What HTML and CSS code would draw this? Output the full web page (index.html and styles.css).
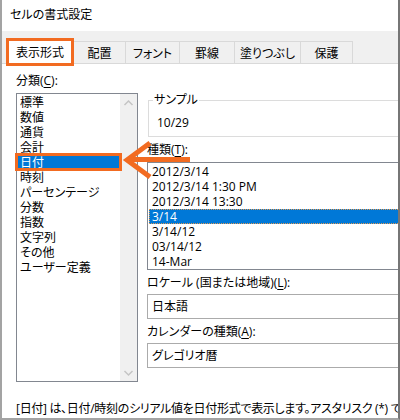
FILE: index.html
```html
<!DOCTYPE html>
<html lang="ja">
<head>
<meta charset="utf-8">
<title>セルの書式設定</title>
<link rel="stylesheet" href="styles.css">
</head>
<body>
<div class="window">
  <div class="titlebar">セルの書式設定</div>
  <div class="tabs">
    <div class="tab tab-active">表示形式</div>
    <div class="tab">配置</div>
    <div class="tab">フォント</div>
    <div class="tab">罫線</div>
    <div class="tab">塗りつぶし</div>
    <div class="tab">保護</div>
  </div>
  <div class="panel">
    <div class="columns">
      <div class="left">
        <div class="label">分類(<u>C</u>):</div>
        <div class="catlist">
          <ul class="cat-items">
            <li>標準</li>
            <li>数値</li>
            <li>通貨</li>
            <li>会計</li>
            <li class="selected">日付</li>
            <li>時刻</li>
            <li>パーセンテージ</li>
            <li>分数</li>
            <li>指数</li>
            <li>文字列</li>
            <li>その他</li>
            <li>ユーザー定義</li>
          </ul>
          <div class="scrollbar">
            <svg class="chev" width="17" height="17" viewBox="0 0 17 17"><polyline points="4.5,11 8.5,7 12.5,11" fill="none" stroke="#c4c4c4" stroke-width="1.5"/></svg>
            <svg class="chev" width="17" height="17" viewBox="0 0 17 17"><polyline points="4.5,7 8.5,11 12.5,7" fill="none" stroke="#c4c4c4" stroke-width="1.5"/></svg>
          </div>
        </div>
      </div>
      <div class="right">
        <fieldset class="sample">
          <legend>サンプル</legend>
          <div class="sample-value">10/29</div>
        </fieldset>
        <div class="label label-gap">種類(<u>T</u>):</div>
        <ul class="typelist">
          <li>2012/3/14</li>
          <li>2012/3/14 1:30 PM</li>
          <li>2012/3/14 13:30</li>
          <li class="selected">3/14</li>
          <li>3/14/12</li>
          <li>03/14/12</li>
          <li>14-Mar</li>
        </ul>
        <div class="label label-gap">ロケール (国または地域)(<u>L</u>):</div>
        <div class="field">日本語</div>
        <div class="label label-gap">カレンダーの種類(<u>A</u>):</div>
        <div class="field">グレゴリオ暦</div>
      </div>
    </div>
    <div class="description">[日付] は、日付/時刻のシリアル値を日付形式で表示します。アスタリスク (*) で始まる日付形式は、オペレーティング システムで指定された地域の日付/時刻の設定の変更に反応します。</div>
  </div>
  <svg class="annotations" width="400" height="420" viewBox="0 0 400 420">
    <rect x="16.5" y="154.5" width="104" height="15" fill="none" stroke="#f26b21" stroke-width="3"/>
    <line x1="128" y1="159.5" x2="190" y2="159.5" stroke="#f26b21" stroke-width="5"/>
    <polyline points="150,143 127,160 150,177" fill="none" stroke="#f26b21" stroke-width="5" stroke-linejoin="miter"/>
  </svg>
</div>
</body>
</html>
```

FILE: styles.css
```css
* {
  box-sizing: border-box;
}

html, body {
  margin: 0;
  padding: 0;
  background: #ffffff;
}

body {
  font-family: "Open Sans", "Noto Sans CJK JP", sans-serif;
  font-size: 12px;
  color: #000000;
  font-feature-settings: "palt";
}

.window {
  position: relative;
  width: 400px;
  height: 420px;
  overflow: hidden;
  background: #ffffff;
  border-left: 2px solid #a3a3a3;
  border-right: 2px solid #767676;
  border-bottom: 2px solid #a3a3a3;
  display: flex;
  flex-direction: column;
}

.titlebar {
  height: 31px;
  line-height: 30px;
  padding-left: 8px;
  flex: none;
}

.tabs {
  flex: none;
  height: 33px;
  padding: 10px 0 0 4px;
  background: #f0f0f0;
  border-bottom: 1px solid #d9d9d9;
  display: grid;
  grid-template-columns: 68px 52px 54px 55px 66px 52px;
  align-items: start;
}

.tab {
  height: 22px;
  display: flex;
  align-items: center;
  justify-content: center;
  border: 1px solid #d9d9d9;
  border-bottom: none;
  margin-left: -1px;
  background: #f0f0f0;
}

.tab-active {
  position: relative;
  z-index: 1;
  margin-left: 0;
  margin-top: -3px;
  height: 28px;
  border: 3px solid #f26b21;
  background: #ffffff;
  padding-bottom: 1px;
}

.panel {
  flex: 1;
  background: #ffffff;
  padding: 9px 0 0 14px;
}

.columns {
  display: grid;
  grid-template-columns: 122px 300px;
  column-gap: 9px;
  align-items: start;
}

.label {
  line-height: 16px;
  height: 16px;
  white-space: nowrap;
}

.label u {
  text-underline-offset: 2px;
}

.catlist {
  margin-top: 4px;
  height: 289px;
  border: 1px solid #828790;
  display: flex;
}

.cat-items {
  list-style: none;
  margin: 0;
  padding: 1px 0 0 0;
  width: 103px;
}

.cat-items li {
  line-height: 15px;
  height: 15px;
  padding-left: 3px;
  white-space: nowrap;
}

.cat-items li.selected,
.typelist li.selected {
  background: #0078d7;
  color: #ffffff;
}

.scrollbar {
  width: 17px;
  background: #f0f0f0;
  display: flex;
  flex-direction: column;
  justify-content: space-between;
}

.chev {
  display: block;
}

.sample {
  margin: 19px 0 0 1px;
  padding: 0 0 5px 8px;
  border: 1px solid #dcdcdc;
  min-width: 0;
  width: 300px;
}

.sample legend {
  padding: 0 1px;
  margin-left: -4px;
  line-height: 16px;
}

.sample-value {
  padding-top: 7px;
  line-height: 16px;
}

.label-gap {
  margin-top: 5px;
}

.typelist {
  list-style: none;
  margin: 4px 0 0 0;
  padding: 1px 0 0 0;
  height: 108px;
  width: 300px;
  border: 1px solid #828790;
}

.typelist li {
  line-height: 15px;
  height: 15px;
  padding-left: 3px;
  margin-left: 1px;
  white-space: nowrap;
}

.typelist li.selected {
  outline: 1px dotted #e39a52;
  outline-offset: -1px;
}

.field {
  margin-top: 3px;
  height: 25px;
  width: 300px;
  line-height: 23px;
  padding-left: 4px;
  border: 1px solid #ababab;
}

.description {
  margin-top: 19px;
  line-height: 16px;
  white-space: nowrap;
  letter-spacing: -0.3px;
}

.annotations {
  position: absolute;
  top: 0;
  left: -2px;
  pointer-events: none;
  z-index: 2;
}
```
